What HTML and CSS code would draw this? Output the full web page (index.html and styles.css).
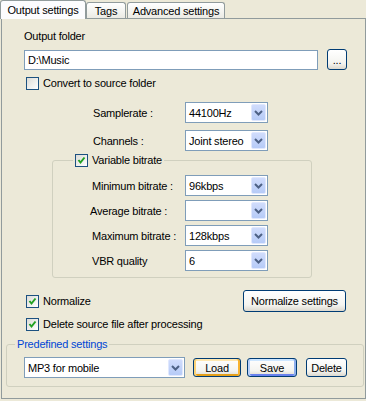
FILE: index.html
```html
<!DOCTYPE html>
<html lang="en">
<head>
    <meta charset="UTF-8">
    <title>Output settings</title>
    <link rel="stylesheet" href="styles.css">
</head>
<body>
<div class="tabs">
    <div class="tab active">Output settings</div>
    <div class="tab tags">Tags</div>
    <div class="tab advanced">Advanced settings</div>
</div>

<div class="panel">
    <div class="label folder-label">Output folder</div>
    <div class="folder-row">
        <input class="text" type="text" value="D:\Music">
        <button class="btn browse">...</button>
    </div>

    <div class="check-row convert"><span class="box"></span>Convert to source folder</div>

    <div class="field first">
        <span class="field-label">Samplerate :</span>
        <div class="combo"><span class="value">44100Hz</span><span class="arrow"><svg width="9" height="6" viewBox="0 0 9 6"><path d="M1 1 L4.5 4.5 L8 1" fill="none" stroke="#4d6185" stroke-width="2"/></svg></span></div>
    </div>
    <div class="field">
        <span class="field-label">Channels :</span>
        <div class="combo"><span class="value">Joint stereo</span><span class="arrow"><svg width="9" height="6" viewBox="0 0 9 6"><path d="M1 1 L4.5 4.5 L8 1" fill="none" stroke="#4d6185" stroke-width="2"/></svg></span></div>
    </div>

    <fieldset class="group vbr">
        <legend><span class="box checked"><svg width="11" height="11" viewBox="0 0 11 11"><path d="M2.5 5 L4.5 7.5 L8.5 2.5" fill="none" stroke="#21a121" stroke-width="2"/></svg></span>Variable bitrate</legend>
        <div class="field first">
            <span class="field-label">Minimum bitrate :</span>
            <div class="combo"><span class="value">96kbps</span><span class="arrow"><svg width="9" height="6" viewBox="0 0 9 6"><path d="M1 1 L4.5 4.5 L8 1" fill="none" stroke="#4d6185" stroke-width="2"/></svg></span></div>
        </div>
        <div class="field">
            <span class="field-label avg">Average bitrate :</span>
            <div class="combo"><span class="value"></span><span class="arrow"><svg width="9" height="6" viewBox="0 0 9 6"><path d="M1 1 L4.5 4.5 L8 1" fill="none" stroke="#4d6185" stroke-width="2"/></svg></span></div>
        </div>
        <div class="field">
            <span class="field-label">Maximum bitrate :</span>
            <div class="combo"><span class="value">128kbps</span><span class="arrow"><svg width="9" height="6" viewBox="0 0 9 6"><path d="M1 1 L4.5 4.5 L8 1" fill="none" stroke="#4d6185" stroke-width="2"/></svg></span></div>
        </div>
        <div class="field">
            <span class="field-label">VBR quality</span>
            <div class="combo"><span class="value">6</span><span class="arrow"><svg width="9" height="6" viewBox="0 0 9 6"><path d="M1 1 L4.5 4.5 L8 1" fill="none" stroke="#4d6185" stroke-width="2"/></svg></span></div>
        </div>
    </fieldset>

    <div class="normalize-row">
        <div class="check-row"><span class="box checked"><svg width="11" height="11" viewBox="0 0 11 11"><path d="M2.5 5 L4.5 7.5 L8.5 2.5" fill="none" stroke="#21a121" stroke-width="2"/></svg></span>Normalize</div>
        <button class="btn norm-settings">Normalize settings</button>
    </div>
    <div class="check-row delete"><span class="box checked"><svg width="11" height="11" viewBox="0 0 11 11"><path d="M2.5 5 L4.5 7.5 L8.5 2.5" fill="none" stroke="#21a121" stroke-width="2"/></svg></span>Delete source file after processing</div>

    <fieldset class="group predefined">
        <legend>Predefined settings</legend>
        <div class="preset-row">
            <div class="combo preset"><span class="value">MP3 for mobile</span><span class="arrow"><svg width="9" height="6" viewBox="0 0 9 6"><path d="M1 1 L4.5 4.5 L8 1" fill="none" stroke="#4d6185" stroke-width="2"/></svg></span></div>
            <button class="btn load">Load</button>
            <button class="btn save">Save</button>
            <button class="btn delete-btn">Delete</button>
        </div>
    </fieldset>
</div>
</body>
</html>
```

FILE: styles.css
```css
body {
    margin: 0;
    width: 366px;
    height: 401px;
    overflow: hidden;
    background: #ece9d8;
    font-family: "Liberation Sans", Arial, sans-serif;
    font-size: 11px;
    letter-spacing: -0.2px;
    color: #000;
}

.tabs {
    display: flex;
    align-items: flex-end;
    height: 18px;
}

.tab {
    box-sizing: border-box;
    height: 16px;
    line-height: 16px;
    text-align: center;
    border: 1px solid #919b9c;
    border-bottom: none;
    border-radius: 3px 3px 0 0;
    background: linear-gradient(#ffffff, #f3f3ef 60%, #ebeae4);
}

.tab.active {
    width: 86px;
    height: 19px;
    line-height: 18px;
    margin-bottom: -1px;
    background: #fcfcfe;
    position: relative;
    z-index: 1;
}

.tab.tags {
    width: 40px;
    margin-right: 1px;
}

.tab.advanced {
    width: 98px;
}

.panel {
    margin-left: 1px;
    height: 381px;
    box-sizing: border-box;
    border: 1px solid #919b9c;
    padding: 11px 0 0 4px;
    background: #ece9d8;
}

.label {
    line-height: 13px;
}

.folder-label {
    margin-left: 18px;
}

.folder-row {
    display: flex;
    align-items: center;
    margin: 6px 0 0 18px;
    height: 21px;
}

.text {
    width: 294px;
    height: 20px;
    box-sizing: border-box;
    border: 1px solid #7f9db9;
    padding: 0 3px;
    margin: 0;
    font: inherit;
    letter-spacing: inherit;
    background: #fff;
}

.btn {
    box-sizing: border-box;
    border: 1px solid #003c74;
    border-radius: 3px;
    background: linear-gradient(#ffffff, #f4f4f0 70%, #dcd8ce);
    font: inherit;
    letter-spacing: inherit;
    color: #000;
    padding: 0;
    margin: 0;
}

.browse {
    margin-left: 9px;
    width: 20px;
    height: 21px;
    line-height: 14px;
}

.check-row {
    display: flex;
    align-items: center;
    height: 13px;
    line-height: 13px;
}

.box {
    width: 13px;
    height: 13px;
    box-sizing: border-box;
    border: 1px solid #1c5180;
    background: linear-gradient(135deg, #dcdcd7, #ffffff);
    margin-right: 4px;
    display: flex;
    align-items: center;
    justify-content: center;
    flex: none;
}

.convert {
    margin: 7px 0 0 20px;
}

.field {
    display: flex;
    align-items: center;
    height: 21px;
    margin-top: 7px;
}

.panel > .field {
    margin-left: 87px;
}

.panel > .field.first {
    margin-top: 12px;
}

.field-label {
    width: 92px;
    flex: none;
}

.combo {
    width: 83px;
    height: 21px;
    box-sizing: border-box;
    border: 1px solid #7f9db9;
    background: #fff;
    display: flex;
    align-items: center;
    justify-content: space-between;
    padding-left: 3px;
}

.arrow {
    width: 15px;
    height: 17px;
    margin-right: 1px;
    box-sizing: border-box;
    border: 1px solid #e0e8fe;
    border-radius: 2px;
    background: linear-gradient(#d0dcfc, #b6cbf7);
    display: flex;
    align-items: center;
    justify-content: center;
}

.group {
    border: 1px solid #d0d0bf;
    border-radius: 3px;
    padding: 0;
    margin: 0;
    min-width: 0;
}

.vbr {
    margin: 3px 0 0 46px;
    width: 260px;
    box-sizing: border-box;
    padding: 0 0 6px 39px;
}

.vbr legend {
    display: flex;
    align-items: center;
    height: 13px;
    line-height: 13px;
    padding: 0 2px;
    margin-left: -19px;
}

.vbr .field {
    margin-top: 4px;
}

.vbr .field.first {
    margin-top: 8px;
}

.vbr .field-label {
    width: 93px;
}

.vbr .field-label.avg {
    margin-left: -2px;
    width: 95px;
}

.normalize-row {
    display: flex;
    align-items: center;
    justify-content: space-between;
    margin: 12px 0 0 20px;
    height: 22px;
    width: 320px;
}

.norm-settings {
    width: 103px;
    height: 22px;
}

.delete {
    margin: 6px 0 0 20px;
}

.predefined {
    margin-top: 7px;
    width: 358px;
    box-sizing: border-box;
    padding: 0 0 8px 17px;
}

.predefined legend {
    color: #0046d5;
    line-height: 13px;
    padding: 0 2px;
    margin-left: -9px;
}

.preset-row {
    display: flex;
    align-items: center;
    margin-top: 6px;
    height: 21px;
}

.preset {
    width: 161px;
}

.preset-row .btn {
    height: 19px;
    margin-left: 8px;
}

.load {
    width: 48px;
    box-shadow: inset 2px 0 0 #fbd277, inset -2px 0 0 #f8b330, inset 0 2px 0 #ffe8b0, inset 0 -2px 0 #e5a01a;
}

.save {
    width: 50px;
    margin-left: 6px !important;
    box-shadow: inset 2px 0 0 #b9d1fa, inset -2px 0 0 #8fb0ee, inset 0 2px 0 #cee7ff, inset 0 -2px 0 #6982ee;
}

.delete-btn {
    width: 41px;
    margin-left: 9px !important;
}
```
